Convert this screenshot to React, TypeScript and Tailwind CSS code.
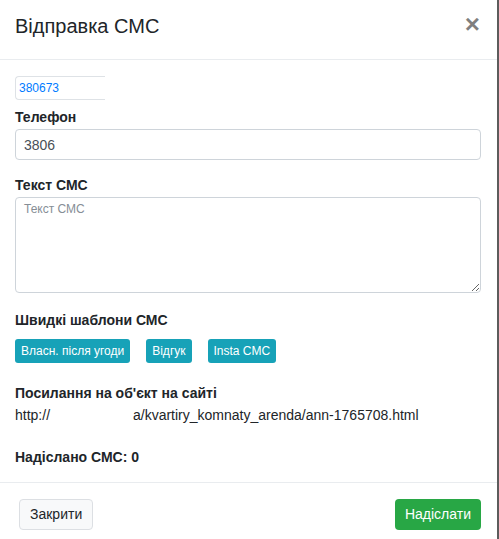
import React from 'react';

const font = { fontFamily: '"Liberation Sans", Arial, sans-serif' };

const templates = ['Власн. після угоди', 'Відгук', 'Insta СМС'];

export default function App() {
  return (
    <div className="w-[499px] h-[539px] flex bg-white text-[#212529] overflow-hidden" style={font}>
      <div className="w-[497px] flex flex-col">
        {/* header */}
        <div className="h-[60px] shrink-0 border-b border-[#e9ecef] pl-[15px] pr-[17px] flex justify-between items-start">
          <h5 className="pt-[11px] text-[20px] leading-[30px] font-normal">Відправка СМС</h5>
          <button className="mt-[11px] text-[26px] leading-none font-bold text-black/50">×</button>
        </div>

        {/* body */}
        <div className="flex-1 pl-[15px] pr-[16px] pt-[16px] flex flex-col">
          <div className="h-[24px] w-[90px] border border-r-0 border-[#dee2e6] rounded-l-[4px] flex items-center pl-[3px]">
            <span className="whitespace-nowrap text-[12px] leading-[16px] text-[#007bff]">380673</span>
          </div>

          <label className="mt-[7px] mb-[2px] text-[14px] leading-[20px] font-bold">Телефон</label>
          <div className="h-[31px] border border-[#ced4da] rounded-[4px] flex items-center pl-[8px]">
            <span className="whitespace-nowrap text-[14px] leading-[20px] text-[#495057]">3806</span>
          </div>

          <label className="mt-[15px] mb-[2px] text-[14px] leading-[20px] font-bold">Текст СМС</label>
          <textarea
            placeholder="Текст СМС"
            className="h-[96px] border border-[#ced4da] rounded-[4px] px-[8px] pt-[3px] text-[12px] leading-[16px] placeholder:text-[#868e96] outline-none"
          />

          <label className="mt-[17px] mb-[9px] text-[14px] leading-[20px] font-bold">Швидкі шаблони СМС</label>
          <div className="flex gap-[16px]">
            {templates.map((t) => (
              <button key={t} className="h-[24px] px-[6px] rounded-[3px] bg-[#17a2b8] text-white text-[12px] leading-none">
                {t}
              </button>
            ))}
          </div>

          <label className="mt-[20px] text-[14px] leading-[20px] font-bold">Посилання на об'єкт на сайті</label>
          <div className="mt-[2px] text-[14px] leading-[20px] whitespace-nowrap">
            <span className="inline-block w-[118px]">http://</span>
            <span>a/kvartiry_komnaty_arenda/ann-1765708.html</span>
          </div>

          <div className="mt-[22px] text-[14px] leading-[20px] font-bold">Надіслано СМС: 0</div>
        </div>

        {/* footer */}
        <div className="h-[57px] shrink-0 border-t border-[#e9ecef] pl-[19px] pr-[16px] pt-[16px] flex justify-between items-start">
          <button className="h-[31px] px-[10px] rounded-[4px] bg-[#f8f9fa] border border-[#dcdfe3] text-[14px] text-[#212529]">Закрити</button>
          <button className="h-[31px] px-[10px] rounded-[4px] bg-[#28a745] text-[14px] text-white">Надіслати</button>
        </div>
      </div>
      <div className="w-[2px] bg-[#5c5c5c]" />
    </div>
  );
}
